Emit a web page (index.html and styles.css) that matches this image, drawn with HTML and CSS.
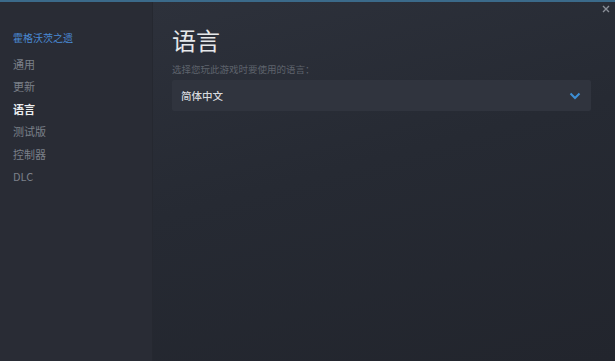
FILE: index.html
```html
<!DOCTYPE html>
<html lang="zh">
<head>
<meta charset="utf-8">
<link rel="stylesheet" href="styles.css">
</head>
<body>
<div class="window">
  <aside class="sidebar">
    <div class="game">霍格沃茨之遗</div>
    <nav class="nav">
      <div class="item">通用</div>
      <div class="item">更新</div>
      <div class="item active">语言</div>
      <div class="item">测试版</div>
      <div class="item">控制器</div>
      <div class="item">DLC</div>
    </nav>
  </aside>
  <main class="main">
    <button class="close" aria-label="close">
      <svg width="8" height="8" viewBox="0 0 8 8"><path d="M1 1L7 7M7 1L1 7" stroke="#8a8f98" stroke-width="1.4"/></svg>
    </button>
    <h1 class="title">语言</h1>
    <div class="hint">选择您玩此游戏时要使用的语言：</div>
    <div class="select">
      <span class="value">简体中文</span>
      <svg class="chev" width="12" height="8" viewBox="0 0 12 8"><path d="M1.5 1.5L6 6L10.5 1.5" fill="none" stroke="#3d8fd6" stroke-width="2"/></svg>
    </div>
  </main>
</div>
</body>
</html>
```
FILE: styles.css
```css
* { box-sizing: border-box; }
html, body { margin: 0; padding: 0; width: 615px; height: 361px; overflow: hidden; }
body { font-family: "Noto Sans CJK SC", "Noto Sans", sans-serif; background: #23262e; }
.window {
  display: flex;
  width: 615px;
  height: 361px;
  border-top: 2px solid #3b6a8a;
}
.sidebar {
  width: 153px;
  flex: none;
  background: #292c35;
  padding: 28px 0 0 13px;
  border-right: 1px solid #252830;
}
.game {
  font-size: 10px;
  line-height: 16px;
  color: #4a8ad4;
  margin-bottom: 7px;
}
.nav { display: flex; flex-direction: column; }
.item {
  font-size: 11px;
  line-height: 22.4px;
  color: #7b8089;
}
.item.active { color: #eceef0; font-weight: 700; }
.main {
  position: relative;
  flex: 1;
  padding: 20px 24px 0 19px;
  background: linear-gradient(165deg, #2d313b 0%, #262a33 45%, #22252d 100%);
}
.close {
  position: absolute;
  top: 1px;
  right: 3px;
  background: none;
  border: 0;
  padding: 2px;
  line-height: 0;
}
.title {
  margin: 0;
  font-size: 24px;
  line-height: 36px;
  font-weight: 400;
  color: #e6e8ea;
}
.hint {
  margin-top: 4px;
  font-size: 9.5px;
  line-height: 14px;
  color: #5e636c;
}
.select {
  margin-top: 4px;
  height: 31px;
  display: flex;
  align-items: center;
  justify-content: space-between;
  padding: 0 10px 0 9px;
  background: #30343e;
  border-radius: 2px;
}
.value { font-size: 10.5px; color: #d6d8dc; font-weight: 500; }
.chev { display: block; }
```
